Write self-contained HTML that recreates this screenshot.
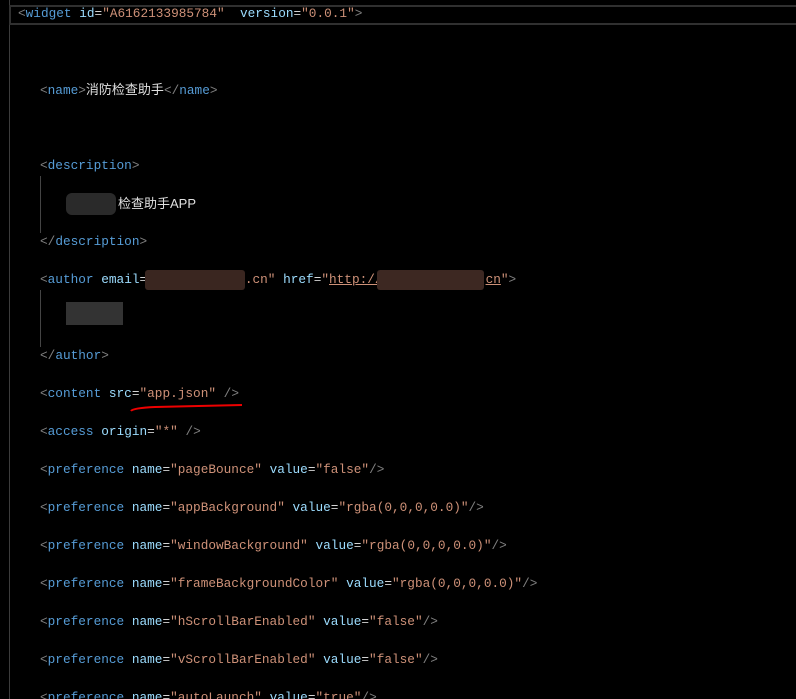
<!DOCTYPE html>
<html><head><meta charset="utf-8"><style>
html,body{margin:0;padding:0;background:#000;width:796px;height:699px;overflow:hidden;position:relative}
.l{position:absolute;left:40px;font-family:"Liberation Mono","Noto Sans CJK SC",monospace;font-size:12.75px;line-height:18px;white-space:pre;color:#d4d4d4}
.b{color:#808080}.t{color:#569cd6}.a{color:#9cdcfe}.s{color:#ce9178}
.cj{font-family:"Liberation Sans","Noto Sans CJK SC",sans-serif;font-size:13px;color:#e0e0e0}
.blur{position:absolute;border-radius:6px}
</style></head><body>
<div style="position:absolute;left:9px;top:0;width:1px;height:699px;background:#3c3c3c"></div>
<div style="position:absolute;left:9px;top:5px;width:787px;height:16px;border:2px solid #303030;border-right:none"></div>
<div class="l" style="left:18px;top:5px"><span class="b">&lt;</span><span class="t">widget</span> <span class="a">id</span>=<span class="s">"A6162133985784"</span>  <span class="a">version</span>=<span class="s">"0.0.1"</span><span class="b">&gt;</span></div>

<div class="l" style="top:81px"><span class="b">&lt;</span><span class="t">name</span><span class="b">&gt;</span><span class="cj">消防检查助手</span><span class="b">&lt;/</span><span class="t">name</span><span class="b">&gt;</span></div>

<div class="l" style="top:157px"><span class="b">&lt;</span><span class="t">description</span><span class="b">&gt;</span></div>
<div style="position:absolute;left:40px;top:176px;width:1px;height:57px;background:#444"></div>
<div class="blur" style="left:66px;top:193px;width:50px;height:22px;background:#2a2a2a"></div>
<div class="l" style="left:118px;top:195px"><span class="cj">检查助手APP</span></div>
<div class="l" style="top:233px"><span class="b">&lt;/</span><span class="t">description</span><span class="b">&gt;</span></div>

<div class="l" style="top:271px"><span class="b">&lt;</span><span class="t">author</span> <span class="a">email</span>=<span class="s">"</span><span style="display:inline-block;width:90px"></span><span class="s">.cn"</span> <span class="a">href</span>=<span class="s">"<u>http://</u></span><span style="display:inline-block;width:103px"></span><span class="s"><u>cn</u>"</span><span class="b">&gt;</span></div>
<div class="blur" style="left:145px;top:270px;width:100px;height:20px;background:#3a2620;border-radius:3px"></div>
<div class="blur" style="left:377px;top:270px;width:107px;height:20px;background:#3d2822;border-radius:3px"></div>
<div style="position:absolute;left:40px;top:290px;width:1px;height:57px;background:#444"></div>
<div class="blur" style="left:66px;top:302px;width:57px;height:23px;background:#333;border-radius:0"></div>
<div class="l" style="top:347px"><span class="b">&lt;/</span><span class="t">author</span><span class="b">&gt;</span></div>

<div class="l" style="top:385px"><span class="b">&lt;</span><span class="t">content</span> <span class="a">src</span>=<span class="s">"app.json"</span> <span class="b">/&gt;</span></div>
<svg style="position:absolute;left:125px;top:400px" width="120" height="15"><path d="M6 11 Q8 8 30 7 L117 5" stroke="#e00" stroke-width="2" fill="none"/></svg>

<div class="l" style="top:423px"><span class="b">&lt;</span><span class="t">access</span> <span class="a">origin</span>=<span class="s">"*"</span> <span class="b">/&gt;</span></div>
<div class="l" style="top:461px"><span class="b">&lt;</span><span class="t">preference</span> <span class="a">name</span>=<span class="s">"pageBounce"</span> <span class="a">value</span>=<span class="s">"false"</span><span class="b">/&gt;</span></div>
<div class="l" style="top:499px"><span class="b">&lt;</span><span class="t">preference</span> <span class="a">name</span>=<span class="s">"appBackground"</span> <span class="a">value</span>=<span class="s">"rgba(0,0,0,0.0)"</span><span class="b">/&gt;</span></div>
<div class="l" style="top:537px"><span class="b">&lt;</span><span class="t">preference</span> <span class="a">name</span>=<span class="s">"windowBackground"</span> <span class="a">value</span>=<span class="s">"rgba(0,0,0,0.0)"</span><span class="b">/&gt;</span></div>
<div class="l" style="top:575px"><span class="b">&lt;</span><span class="t">preference</span> <span class="a">name</span>=<span class="s">"frameBackgroundColor"</span> <span class="a">value</span>=<span class="s">"rgba(0,0,0,0.0)"</span><span class="b">/&gt;</span></div>
<div class="l" style="top:613px"><span class="b">&lt;</span><span class="t">preference</span> <span class="a">name</span>=<span class="s">"hScrollBarEnabled"</span> <span class="a">value</span>=<span class="s">"false"</span><span class="b">/&gt;</span></div>
<div class="l" style="top:651px"><span class="b">&lt;</span><span class="t">preference</span> <span class="a">name</span>=<span class="s">"vScrollBarEnabled"</span> <span class="a">value</span>=<span class="s">"false"</span><span class="b">/&gt;</span></div>
<div class="l" style="top:689px"><span class="b">&lt;</span><span class="t">preference</span> <span class="a">name</span>=<span class="s">"autoLaunch"</span> <span class="a">value</span>=<span class="s">"true"</span><span class="b">/&gt;</span></div>
</body></html>
